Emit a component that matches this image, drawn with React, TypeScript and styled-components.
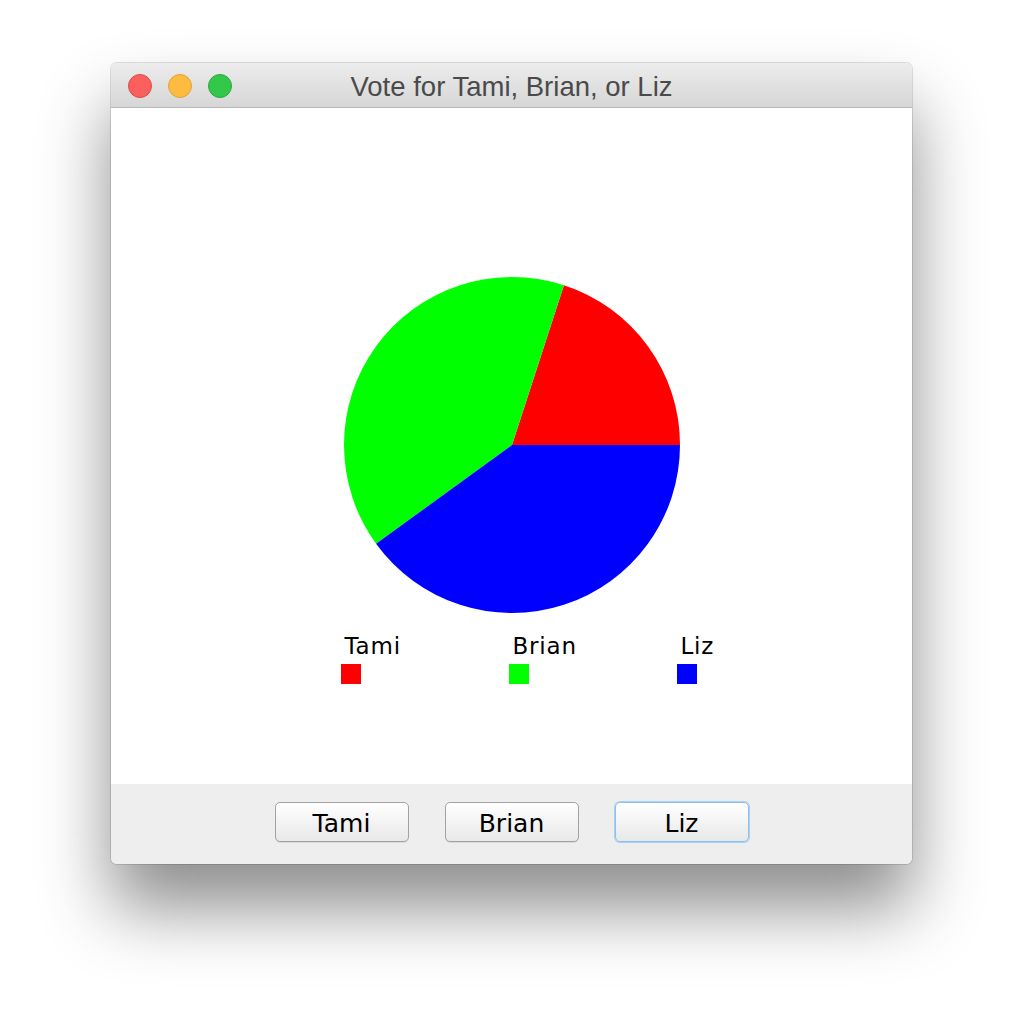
import styled, { createGlobalStyle } from "styled-components";

const GlobalStyle = createGlobalStyle`
  html, body {
    margin: 0;
    padding: 0;
    background: #ffffff;
  }
`;

const Page = styled.div`
  width: 1024px;
  height: 1024px;
  padding: 63px 0 0 111px;
  box-sizing: border-box;
`;

const Window = styled.div`
  width: 801px;
  height: 801px;
  border-radius: 6px;
  overflow: hidden;
  display: flex;
  flex-direction: column;
  box-shadow: 0 44px 70px rgba(0, 0, 0, 0.45), 0 0 0 1px rgba(0, 0, 0, 0.12);
`;

const TitleBar = styled.div`
  height: 44px;
  display: flex;
  align-items: center;
  position: relative;
  background: linear-gradient(#ececec, #d6d6d6);
  border-bottom: 1px solid #b8b8b8;
`;

const Lights = styled.div`
  display: flex;
  gap: 16px;
  padding-left: 17px;
  padding-top: 2px;
`;

const Light = styled.span<{ $fill: string; $edge: string }>`
  width: 24px;
  height: 24px;
  border-radius: 50%;
  box-sizing: border-box;
  background: ${(p) => p.$fill};
  border: 1px solid ${(p) => p.$edge};
`;

const Title = styled.div`
  position: absolute;
  left: 0;
  right: 0;
  top: 9px;
  text-align: center;
  font-family: "Liberation Sans", Arial, sans-serif;
  font-size: 27.5px;
  line-height: 30px;
  color: #4a4a4a;
`;

const Content = styled.div`
  flex: 1;
  background: #ffffff;
  display: flex;
  flex-direction: column;
  align-items: center;
  padding-top: 169px;
`;

const PieSvg = styled.svg`
  display: block;
  margin-left: 1px;
`;

const Legend = styled.div`
  display: grid;
  grid-template-columns: repeat(3, 168px);
  margin-top: 20px;
  margin-left: 162px;
  font-family: "DejaVu Sans", "Lucida Grande", sans-serif;
`;

const LegendItem = styled.div`
  display: flex;
  flex-direction: column;
  align-items: flex-start;
`;

const LegendLabel = styled.span`
  font-size: 23px;
  line-height: 26px;
  letter-spacing: 0.8px;
  color: #000;
  padding-left: 4px;
`;

const Swatch = styled.span<{ $color: string }>`
  width: 20px;
  height: 20px;
  margin-top: 5px;
  background: ${(p) => p.$color};
`;

const ButtonBar = styled.div`
  height: 80px;
  background: #eeeeee;
  display: flex;
  justify-content: center;
  align-items: flex-start;
  gap: 36px;
  padding-top: 18px;
  box-sizing: border-box;
`;

const VoteButton = styled.button<{ $focused?: boolean }>`
  width: 134px;
  height: 40px;
  border-radius: 5px;
  box-sizing: border-box;
  background: linear-gradient(#ffffff, #f1f1f1 60%, #e8e8e8);
  border: 1px solid ${(p) => (p.$focused ? "#8fc1f0" : "#a2a2a2")};
  box-shadow: ${(p) => (p.$focused ? "0 0 0 1px #a8d0f5" : "0 1px 0 rgba(0,0,0,0.08)")};
  font-family: "DejaVu Sans", "Lucida Grande", sans-serif;
  font-size: 25px;
  line-height: 38px;
  color: #000;
  padding: 2px 0 0;
`;

const votes = [
  { name: "Tami", count: 1, color: "#ff0000" },
  { name: "Brian", count: 2, color: "#00ff00" },
  { name: "Liz", count: 2, color: "#0000ff" },
];

function Pie() {
  const r = 168;
  const c = 168;
  const total = votes.reduce((s, v) => s + v.count, 0);
  let start = 0;
  return (
    <PieSvg width={336} height={336} viewBox="0 0 336 336">
      {votes.map((v) => {
        const sweep = (v.count / total) * 360;
        const a0 = (start * Math.PI) / 180;
        const a1 = ((start + sweep) * Math.PI) / 180;
        start += sweep;
        const x0 = c + r * Math.cos(a0);
        const y0 = c - r * Math.sin(a0);
        const x1 = c + r * Math.cos(a1);
        const y1 = c - r * Math.sin(a1);
        const large = sweep > 180 ? 1 : 0;
        return (
          <path
            key={v.name}
            d={`M${c},${c} L${x0},${y0} A${r},${r} 0 ${large} 0 ${x1},${y1} Z`}
            fill={v.color}
          />
        );
      })}
    </PieSvg>
  );
}

export default function App() {
  return (
    <>
      <GlobalStyle />
      <Page>
        <Window>
          <TitleBar>
            <Lights>
              <Light $fill="#fc605c" $edge="#de4a45" />
              <Light $fill="#fdbc40" $edge="#dea236" />
              <Light $fill="#34c84a" $edge="#27a93a" />
            </Lights>
            <Title>Vote for Tami, Brian, or Liz</Title>
          </TitleBar>
          <Content>
            <Pie />
            <Legend>
              {votes.map((v) => (
                <LegendItem key={v.name}>
                  <LegendLabel>{v.name}</LegendLabel>
                  <Swatch $color={v.color} />
                </LegendItem>
              ))}
            </Legend>
          </Content>
          <ButtonBar>
            <VoteButton>Tami</VoteButton>
            <VoteButton>Brian</VoteButton>
            <VoteButton $focused>Liz</VoteButton>
          </ButtonBar>
        </Window>
      </Page>
    </>
  );
}
